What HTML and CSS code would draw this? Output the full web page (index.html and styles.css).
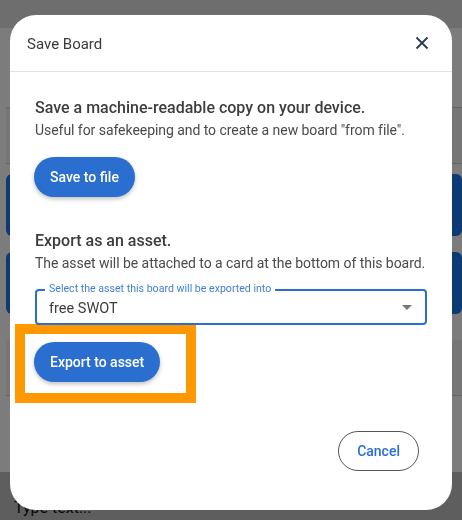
FILE: index.html
```html
<!DOCTYPE html>
<html lang="en">
<head>
    <meta charset="UTF-8">
    <meta name="viewport" content="width=device-width, initial-scale=1.0">
    <title>Save Board</title>
    <link rel="stylesheet" href="styles.css">
</head>
<body>
    <!-- Board behind the dialog -->
    <div class="page">
        <div class="topbar"></div>
        <div class="board">
            <div class="board-head"></div>
            <div class="board-row"></div>
            <div class="card-list">
                <div class="card"></div>
                <div class="card"></div>
            </div>
            <div class="board-row"></div>
            <div class="board-foot">
                <div class="note">Type text...</div>
            </div>
        </div>
    </div>

    <!-- Save Board dialog -->
    <div class="overlay">
        <div class="dialog">
            <div class="dialog-header">
                <h2>Save Board</h2>
                <button class="close-btn" aria-label="Close">
                    <svg width="14" height="14" viewBox="0 0 14 14">
                        <path d="M1.5 1.5 L12.5 12.5 M12.5 1.5 L1.5 12.5" stroke="#2b3a50" stroke-width="1.8" fill="none"/>
                    </svg>
                </button>
            </div>
            <div class="dialog-content">
                <h3>Save a machine-readable copy on your device.</h3>
                <p>Useful for safekeeping and to create a new board "from file".</p>
                <button class="btn-filled save-btn">Save to file</button>

                <h3 class="section-gap">Export as an asset.</h3>
                <p>The asset will be attached to a card at the bottom of this board.</p>
                <div class="select-field">
                    <span class="select-label">Select the asset this board will be exported into</span>
                    <span class="select-value">free SWOT</span>
                    <span class="select-arrow"></span>
                </div>
                <div class="highlight">
                    <button class="btn-filled">Export to asset</button>
                </div>
            </div>
            <div class="dialog-actions">
                <button class="btn-outline">Cancel</button>
            </div>
        </div>
    </div>
</body>
</html>
```

FILE: styles.css
```css
* {
    margin: 0;
    padding: 0;
    box-sizing: border-box;
}
body {
    font-family: Roboto, 'Noto Sans', sans-serif;
    background: #f8f8f8;
    color: #333;
    width: 462px;
    height: 520px;
    overflow: hidden;
}

/* Background page */
.page {
    height: 520px;
}
.topbar {
    height: 28px;
    background: #dcdcdc;
}
.board {
    padding: 20px 0 0 6px;
}
.board-head {
    height: 60px;
    border-bottom: 1px solid #ccc;
}
.board-row {
    height: 56px;
    background: #ececec;
    border-bottom: 1px solid #ccc;
}
.card-list {
    padding: 10px 0;
}
.card {
    height: 62px;
    margin-bottom: 16px;
    background: #1a73e8;
    border-radius: 6px;
}
.board-foot {
    padding: 76px 0 0 0;
}
.note {
    margin-left: -6px;
    padding: 26px 14px 10px;
    background: #bdbdbd;
    font-size: 16px;
    color: #111;
    height: 60px;
}

/* Overlay */
.overlay {
    position: fixed;
    top: 0;
    left: 0;
    width: 100%;
    height: 100%;
    background: rgba(0, 0, 0, 0.5);
    display: flex;
    justify-content: center;
    align-items: flex-start;
    padding-top: 15px;
}
.dialog {
    width: 442px;
    background: white;
    border-radius: 26px;
    overflow: hidden;
}
.dialog-header {
    height: 57px;
    display: flex;
    align-items: center;
    justify-content: space-between;
    padding: 0 18px 0 17px;
    border-bottom: 1px solid #e3e3e3;
}
.dialog-header h2 {
    font-size: 15px;
    font-weight: 400;
    color: #3a3a3a;
    margin-top: 1px;
}
.close-btn {
    background: none;
    border: none;
    width: 24px;
    height: 24px;
    display: flex;
    align-items: center;
    justify-content: center;
    cursor: pointer;
}
.dialog-content {
    padding: 24px 25px 0 25px;
}
.dialog-content h3 {
    font-size: 16px;
    font-weight: 500;
    line-height: 24px;
    color: #3d3d3d;
}
.dialog-content p {
    font-size: 14px;
    line-height: 20px;
    color: #4a4a4a;
    white-space: nowrap;
    letter-spacing: -0.05px;
}
.section-gap {
    margin-top: 32px;
}
.btn-filled {
    height: 40px;
    padding: 0 16px;
    border: none;
    border-radius: 20px;
    background: #2a6fd0;
    color: white;
    font-family: inherit;
    font-size: 14px;
    font-weight: 500;
    box-shadow: 0 2px 4px rgba(0, 0, 0, 0.25);
    cursor: pointer;
}
.save-btn {
    margin-top: 17px;
    margin-left: -1px;
}

/* Select field */
.select-field {
    position: relative;
    margin-top: 16px;
    height: 36px;
    border: 2px solid #2a6fd0;
    border-radius: 4px;
    display: flex;
    align-items: center;
    padding: 0 12px;
}
.select-label {
    position: absolute;
    top: -9px;
    left: 8px;
    padding: 0 4px;
    background: white;
    font-size: 10.6px;
    line-height: 14px;
    color: #3f7fd9;
}
.select-value {
    font-size: 14.5px;
    color: #3d3d3d;
    flex: 1;
    margin-top: 2px;
}
.select-arrow {
    width: 0;
    height: 0;
    border-left: 5px solid transparent;
    border-right: 5px solid transparent;
    border-top: 5px solid #777;
    margin-right: 1px;
}

/* Orange highlight around the export button */
.highlight {
    width: fit-content;
    margin: -1px 0 0 -20px;
    border: 10px solid #fd9800;
    background: white;
    padding: 8px 26px 11px 9px;
}
.highlight .btn-filled {
    display: block;
}

.dialog-actions {
    display: flex;
    justify-content: flex-end;
    padding: 28px 33px 39px 0;
}
.btn-outline {
    height: 40px;
    padding: 0 18px;
    border: 1px solid #555;
    border-radius: 20px;
    background: white;
    color: #2a6fd0;
    font-family: inherit;
    font-size: 14px;
    font-weight: 500;
    cursor: pointer;
}
```
